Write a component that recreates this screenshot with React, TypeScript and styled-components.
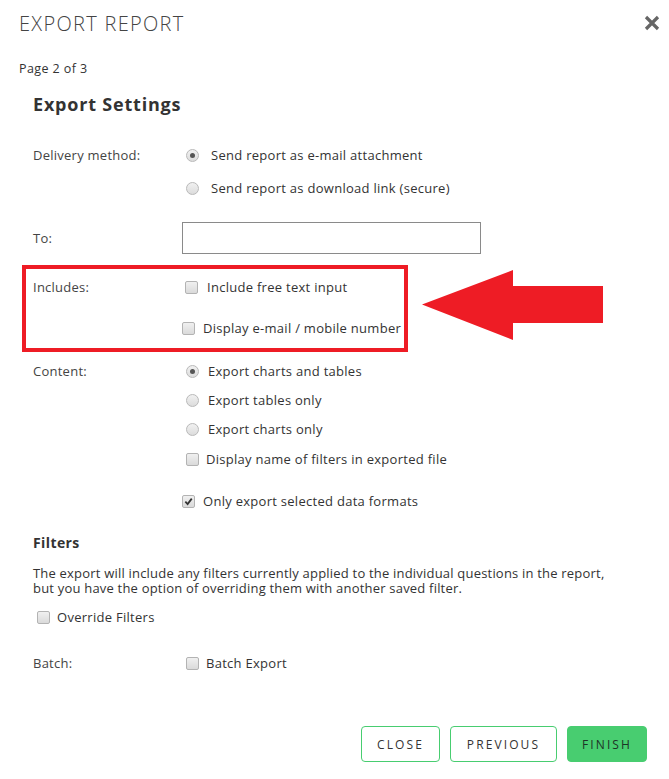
import React from "react";
import styled, { createGlobalStyle } from "styled-components";

const GlobalStyle = createGlobalStyle`
  html, body {
    margin: 0;
    padding: 0;
    background: #fff;
  }
  body {
    font-family: "Open Sans", "Liberation Sans", sans-serif;
    color: #333;
  }
`;

const Modal = styled.div`
  width: 669px;
  height: 779px;
  box-sizing: border-box;
  display: flex;
  flex-direction: column;
`;

const Header = styled.div`
  height: 46px;
  padding: 0 7px 0 19px;
  display: flex;
  align-items: center;
  justify-content: space-between;
`;

const Title = styled.h1`
  margin: 0;
  font-size: 20px;
  font-weight: 300;
  letter-spacing: 1.3px;
  color: #444;
`;

const CloseIcon = styled.button`
  border: 0;
  background: none;
  padding: 0;
  width: 20px;
  height: 20px;
  display: flex;
  align-items: center;
  justify-content: center;
  cursor: pointer;
`;

const PageInfo = styled.div`
  height: 44px;
  padding-left: 19px;
  display: flex;
  align-items: center;
  font-size: 12.5px;
  letter-spacing: 0.4px;
  color: #333;
`;

const Body = styled.div`
  padding: 0 22px;
  display: flex;
  flex-direction: column;
`;

const Heading = styled.h2<{ $size: number; $h: number; $top?: number; $spacing: number }>`
  margin: ${(p) => p.$top ?? 0}px 0 0 0;
  padding-left: 11px;
  height: ${(p) => p.$h}px;
  display: flex;
  align-items: center;
  font-size: ${(p) => p.$size}px;
  letter-spacing: ${(p) => p.$spacing}px;
  font-weight: 700;
  color: #333;
`;

const Row = styled.div<{ $top?: number; $h?: number; $pad?: number }>`
  margin-top: ${(p) => p.$top ?? 0}px;
  height: ${(p) => p.$h ?? 30}px;
  padding-left: ${(p) => p.$pad ?? 11}px;
  display: grid;
  grid-template-columns: 149px 1fr;
  align-items: center;
`;

const Label = styled.span`
  font-size: 13px;
  letter-spacing: 0.25px;
  color: #444;
`;

const Option = styled.label<{ $indent: number; $gap: number }>`
  display: flex;
  align-items: center;
  gap: ${(p) => p.$gap}px;
  padding-left: ${(p) => p.$indent}px;
  font-size: 13px;
  letter-spacing: 0.28px;
  color: #333;
`;

const Radio = styled.span<{ $checked?: boolean }>`
  width: 11px;
  height: 11px;
  border-radius: 50%;
  border: 1px solid #b9b9b9;
  background: linear-gradient(#f1f1f1, #dcdcdc);
  display: flex;
  align-items: center;
  justify-content: center;
  flex-shrink: 0;
  &::after {
    content: "";
    width: 5px;
    height: 5px;
    border-radius: 50%;
    background: ${(p) => (p.$checked ? "#555" : "transparent")};
  }
`;

const Box = styled.span`
  width: 11px;
  height: 11px;
  border-radius: 2px;
  border: 1px solid #b3b3b3;
  background: linear-gradient(#f0f0f0, #dadada);
  display: flex;
  align-items: center;
  justify-content: center;
  flex-shrink: 0;
`;

const TextInput = styled.input`
  width: 299px;
  height: 32px;
  box-sizing: border-box;
  border: 1px solid #8a8a8a;
  outline: none;
  padding: 0 8px;
  font: inherit;
`;

const Highlight = styled.div`
  margin-top: 11px;
  display: flex;
  align-items: center;
  gap: 14px;
`;

const RedFrame = styled.div`
  width: 386px;
  height: 87px;
  box-sizing: border-box;
  border: 4px solid #ee1c25;
  padding-top: 3px;
  display: flex;
  flex-direction: column;
`;

const Arrow = styled.svg`
  margin-top: -8px;
  flex-shrink: 0;
`;

const Paragraph = styled.p<{ $top: number }>`
  margin: ${(p) => p.$top}px 0 0 0;
  padding-left: 11px;
  font-size: 13px;
  letter-spacing: 0.2px;
  line-height: 15px;
  color: #333;
  white-space: nowrap;
`;

const Footer = styled.div`
  margin-top: auto;
  padding: 0 22px 17px 0;
  display: flex;
  justify-content: flex-end;
  gap: 10px;
`;

const Button = styled.button<{ $primary?: boolean; $w: number }>`
  width: ${(p) => p.$w}px;
  height: 36px;
  border: 1px solid #48cd70;
  border-radius: 4px;
  background: ${(p) => (p.$primary ? "#48cd70" : "#fff")};
  color: ${(p) => (p.$primary ? "#1e3327" : "#333")};
  font-family: "Open Sans", "Liberation Sans", sans-serif;
  font-size: 12px;
  letter-spacing: 2.1px;
  cursor: pointer;
`;

const Check = () => (
  <svg width="9" height="9" viewBox="0 0 10 10">
    <path d="M1.5 5.2 L4 7.8 L8.6 1.8" fill="none" stroke="#333" strokeWidth="2" />
  </svg>
);

const RadioOpt = ({ text, checked, gap }: { text: string; checked?: boolean; gap: number }) => (
  <Option $indent={4} $gap={gap}>
    <Radio $checked={checked} />
    {text}
  </Option>
);

const CheckOpt = ({ text, checked, indent, gap }: { text: string; checked?: boolean; indent: number; gap: number }) => (
  <Option $indent={indent} $gap={gap}>
    <Box>{checked && <Check />}</Box>
    {text}
  </Option>
);

export default function App() {
  return (
    <>
      <GlobalStyle />
      <Modal>
        <Header>
          <Title>EXPORT REPORT</Title>
          <CloseIcon aria-label="close">
            <svg width="16" height="16" viewBox="0 0 16 16">
              <path d="M2 2 L14 14 M14 2 L2 14" stroke="#666" strokeWidth="3.2" />
            </svg>
          </CloseIcon>
        </Header>
        <PageInfo>Page 2 of 3</PageInfo>
        <Body>
          <Heading $size={18} $h={28} $spacing={0.8}>Export Settings</Heading>

          <Row $top={22}>
            <Label>Delivery method:</Label>
            <RadioOpt text="Send report as e-mail attachment" checked gap={12} />
          </Row>
          <Row $top={3}>
            <span />
            <RadioOpt text="Send report as download link (secure)" gap={12} />
          </Row>

          <Row $top={19} $h={32}>
            <Label>To:</Label>
            <TextInput type="text" />
          </Row>

          <Highlight>
            <RedFrame>
              <Row $pad={7}>
                <Label>Includes:</Label>
                <CheckOpt text="Include free text input" indent={3} gap={9} />
              </Row>
              <Row $top={11} $pad={7}>
                <span />
                <CheckOpt text="Display e-mail / mobile number" indent={0} gap={8} />
              </Row>
            </RedFrame>
            <Arrow width="181" height="70" viewBox="0 0 181 70">
              <polygon points="0,34.5 91,0 91,16 181,16 181,53 91,53 91,70" fill="#ee1c25" />
            </Arrow>
          </Highlight>

          <Row $top={4}>
            <Label>Content:</Label>
            <RadioOpt text="Export charts and tables" checked gap={9} />
          </Row>
          <Row $top={-1}>
            <span />
            <RadioOpt text="Export tables only" gap={9} />
          </Row>
          <Row $top={-1}>
            <span />
            <RadioOpt text="Export charts only" gap={9} />
          </Row>
          <Row>
            <span />
            <CheckOpt text="Display name of filters in exported file" indent={4} gap={7} />
          </Row>
          <Row $top={12}>
            <span />
            <CheckOpt text="Only export selected data formats" checked indent={0} gap={8} />
          </Row>

          <Heading $size={14} $h={20} $top={16} $spacing={0.4}>Filters</Heading>
          <Paragraph $top={14}>
            The export will include any filters currently applied to the individual questions in the report,
            <br />
            but you have the option of overriding them with another saved filter.
          </Paragraph>
          <Row $top={6}>
            <CheckOpt text="Override Filters" indent={4} gap={7} />
          </Row>
          <Row $top={16}>
            <Label>Batch:</Label>
            <CheckOpt text="Batch Export" indent={4} gap={7} />
          </Row>
        </Body>
        <Footer>
          <Button $w={79}>CLOSE</Button>
          <Button $w={107}>PREVIOUS</Button>
          <Button $w={80} $primary>FINISH</Button>
        </Footer>
      </Modal>
    </>
  );
}
